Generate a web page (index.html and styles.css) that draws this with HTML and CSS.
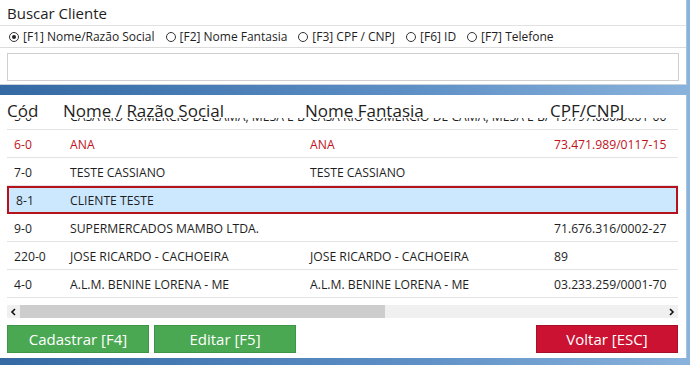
FILE: index.html
```html
<!DOCTYPE html>
<html lang="pt-BR">
<head>
    <meta charset="UTF-8">
    <meta name="viewport" content="width=device-width, initial-scale=1.0">
    <title>Buscar Cliente</title>
    <link rel="stylesheet" href="styles.css">
</head>
<body>

<!-- filtro de busca -->
<div class="search-panel">
  <div class="search-title">Buscar Cliente</div>
  <div class="radio-row">
    <label class="radio-opt"><span class="radio checked"></span>[F1] Nome/Razão Social</label>
    <label class="radio-opt"><span class="radio"></span>[F2] Nome Fantasia</label>
    <label class="radio-opt"><span class="radio"></span>[F3] CPF / CNPJ</label>
    <label class="radio-opt"><span class="radio"></span>[F6] ID</label>
    <label class="radio-opt"><span class="radio"></span>[F7] Telefone</label>
  </div>
  <input type="text" class="search-input">
</div>

<!-- lista de clientes -->
<div class="list-panel">
  <div class="list-header">
    <div>Cód</div>
    <div>Nome / Razão Social</div>
    <div>Nome Fantasia</div>
    <div>CPF/CNPJ</div>
  </div>

  <div class="list-body">
    <div class="row first">
      <div>5-0</div>
      <div>CASA RIO COMERCIO DE CAMA, MESA E BANHO LTDA</div>
      <div>CASA RIO COMERCIO DE CAMA, MESA E BANHO LTDA</div>
      <div>19.797.080/0001-00</div>
    </div>
    <div class="row inactive">
      <div>6-0</div>
      <div>ANA</div>
      <div>ANA</div>
      <div>73.471.989/0117-15</div>
    </div>
    <div class="row">
      <div>7-0</div>
      <div>TESTE CASSIANO</div>
      <div>TESTE CASSIANO</div>
      <div></div>
    </div>
    <div class="row selected">
      <div>8-1</div>
      <div>CLIENTE TESTE</div>
      <div></div>
      <div></div>
    </div>
    <div class="row">
      <div>9-0</div>
      <div>SUPERMERCADOS MAMBO LTDA.</div>
      <div></div>
      <div>71.676.316/0002-27</div>
    </div>
    <div class="row">
      <div>220-0</div>
      <div>JOSE RICARDO - CACHOEIRA</div>
      <div>JOSE RICARDO - CACHOEIRA</div>
      <div>89</div>
    </div>
    <div class="row">
      <div>4-0</div>
      <div>A.L.M. BENINE LORENA - ME</div>
      <div>A.L.M. BENINE LORENA - ME</div>
      <div>03.233.259/0001-70</div>
    </div>
  </div>

  <div class="hscroll">
    <span class="arrow">
      <svg width="7" height="8" viewBox="0 0 7 8"><path d="M5 1 L2 4 L5 7" fill="none" stroke="#111" stroke-width="1.6"/></svg>
    </span>
    <div class="track"><div class="thumb"></div></div>
    <span class="arrow">
      <svg width="7" height="8" viewBox="0 0 7 8"><path d="M2 1 L5 4 L2 7" fill="none" stroke="#111" stroke-width="1.6"/></svg>
    </span>
  </div>

  <div class="actions">
    <button class="btn btn-green">Cadastrar [F4]</button>
    <button class="btn btn-green">Editar [F5]</button>
    <span class="spacer"></span>
    <button class="btn btn-red">Voltar [ESC]</button>
  </div>
</div>

</body>
</html>
```

FILE: styles.css
```css
* {
  box-sizing: border-box;
}

body {
  margin: 0;
  padding: 0;
  width: 690px;
  height: 365px;
  overflow: hidden;
  font-family: "Open Sans", "Noto Sans", sans-serif;
  color: #1e1e1e;
  background: linear-gradient(90deg, #3469a3, #5e90c6 60%, #8ab3dc);
}

/* ---------- busca ---------- */

.search-panel {
  width: 687px;
  height: 85px;
  background-color: #ffffff;
  border-right: 1px solid #a9c4de;
  border-bottom: 1px solid #c9d3dd;
}

.search-title {
  height: 26px;
  padding: 3px 0 0 7px;
  font-size: 15px;
  line-height: 20px;
  border-bottom: 1px solid #e2e2e2;
}

.radio-row {
  display: flex;
  align-items: center;
  gap: 11px;
  height: 22px;
  padding-left: 9px;
  font-size: 12px;
  border-bottom: 1px solid #dcdcdc;
}

.radio-opt {
  display: flex;
  align-items: center;
  gap: 4px;
}

.radio {
  position: relative;
  width: 10px;
  height: 10px;
  border: 1px solid #333;
  border-radius: 50%;
}

.radio.checked::after {
  content: "";
  position: absolute;
  left: 2px;
  top: 2px;
  width: 4px;
  height: 4px;
  border-radius: 50%;
  background-color: #222;
}

.search-input {
  display: block;
  width: 672px;
  height: 28px;
  margin: 5px 0 0 7px;
  border: 1px solid #cfcfcf;
  border-radius: 0;
  outline: none;
}

/* ---------- lista ---------- */

.list-panel {
  width: 687px;
  height: 263px;
  margin-top: 10px;
  padding: 0 8px 0 7px;
  background-color: #ffffff;
  border-right: 1px solid #a9c4de;
}

.list-header,
.row {
  display: grid;
  grid-template-columns: 56px 242px 245px 1fr;
}

.list-header {
  height: 23px;
  padding-top: 5px;
  font-size: 17px;
  line-height: 22px;
  white-space: nowrap;
}

.list-body {
  height: 180px;
  overflow: hidden;
}

.row {
  height: 28px;
  padding-top: 3px;
  font-size: 12.2px;
  line-height: 24px;
  border-bottom: 1px solid #e3e3e3;
  white-space: nowrap;
}

.row > div {
  overflow: hidden;
  padding-left: 7px;
}

.row > div:nth-child(3) {
  padding-left: 5px;
}

.row > div:nth-child(4) {
  padding-left: 4px;
}

.row.first {
  margin-top: -16px;
}

.row.inactive {
  color: #c1121c;
}

.row.selected {
  grid-template-columns: 54px 242px 245px 1fr;
  padding-top: 1px;
  background-color: #cce8ff;
  border: 2px solid #b5121b;
}

/* ---------- barra de rolagem ---------- */

.hscroll {
  display: flex;
  align-items: center;
  height: 13px;
  margin-top: 7px;
  background-color: #f0f0f0;
}

.arrow {
  display: flex;
  align-items: center;
  justify-content: center;
  width: 13px;
  height: 13px;
}

.track {
  flex: 1;
  height: 13px;
}

.thumb {
  width: 365px;
  height: 13px;
  background-color: #cdcdcd;
}

/* ---------- botões ---------- */

.actions {
  display: flex;
  gap: 5px;
  margin-top: 7px;
}

.spacer {
  flex: 1;
}

.btn {
  width: 142px;
  height: 28px;
  padding: 0;
  font-family: "Open Sans", "Noto Sans", sans-serif;
  font-size: 15px;
  color: #ffffff;
  border-radius: 0;
  cursor: pointer;
}

.btn-green {
  background-color: #4aa852;
  border: 1px solid #3f9446;
}

.btn-red {
  background-color: #cc1233;
  border: 1px solid #a80f29;
}
```
